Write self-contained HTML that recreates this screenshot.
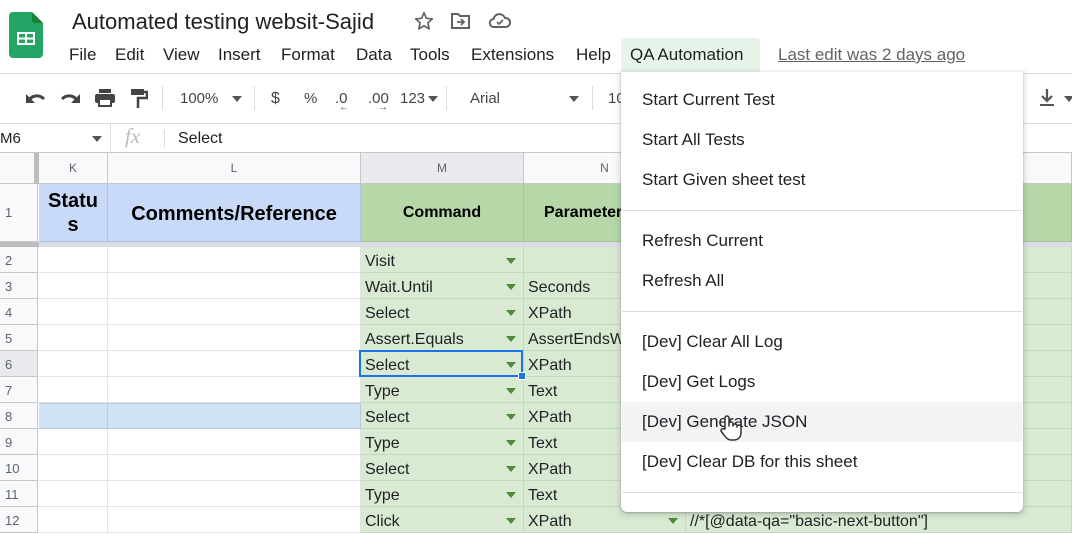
<!DOCTYPE html>
<html><head><meta charset="utf-8"><style>
*{box-sizing:border-box;margin:0;padding:0}
body{width:1072px;height:527px;overflow:hidden;background:#fff;font-family:"Liberation Sans",Arial,sans-serif;position:relative;color:#202124}
.a{position:absolute}
.t{position:absolute;white-space:nowrap}
.menu span{position:absolute;top:45px;font-size:17px;color:#202124}
.tb{position:absolute;top:90px;font-size:15px;color:#444}
.hdr{position:absolute;top:153px;height:31px;background:#f8f9fa;border-right:1px solid #c7c7c7;border-bottom:1px solid #c7c7c7;font-size:12px;color:#5f6368;text-align:center;line-height:31px}
.rn{position:absolute;left:0;width:38px;height:26px;background:#f8f9fa;border-bottom:1px solid #c7c7c7;border-right:1px solid #c7c7c7;font-size:13px;color:#5f6368;padding-left:5px;line-height:27px}
.c{position:absolute;height:26px;border-right:1px solid #e2e3e3;border-bottom:1px solid #e2e3e3;font-size:16px;line-height:30px;padding-left:4px;white-space:nowrap;overflow:hidden}
.g{background:#d9ead3;border-color:#c3d9bc}
.dd{position:absolute;width:0;height:0;border-left:5px solid transparent;border-right:5px solid transparent;border-top:6px solid #4f8a3b}
.mi{position:absolute;left:642px;font-size:17px;color:#202124;white-space:nowrap}
.sep{position:absolute;left:622px;width:400px;height:1px;background:#dadce0}
</style></head><body>
<svg class="a" style="left:9px;top:12px" width="34" height="46" viewBox="0 0 34 46"><path d="M4 0H23L34 11V42a4 4 0 0 1-4 4H4a4 4 0 0 1-4-4V4a4 4 0 0 1 4-4z" fill="#23a566"/><path d="M23 0L34 11H26a3 3 0 0 1-3-3z" fill="#188038"/><rect x="8" y="20" width="18" height="13" fill="#fff"/><rect x="10" y="22" width="6" height="3.5" fill="#23a566"/><rect x="18" y="22" width="6" height="3.5" fill="#23a566"/><rect x="10" y="27.5" width="6" height="3.5" fill="#23a566"/><rect x="18" y="27.5" width="6" height="3.5" fill="#23a566"/></svg>
<div class="t" style="left:72px;top:9px;font-size:22px;color:#202124">Automated testing websit-Sajid</div>
<svg class="a" style="left:413px;top:10px" width="22" height="22" viewBox="0 0 24 24"><path d="M12 3l2.6 6.1 6.6.6-5 4.4 1.5 6.5L12 17.2 6.3 20.6l1.5-6.5-5-4.4 6.6-.6z" fill="none" stroke="#5f6368" stroke-width="1.8" stroke-linejoin="round"/></svg>
<svg class="a" style="left:450px;top:11px" width="22" height="20" viewBox="0 0 22 20"><path d="M2 3h6l2 2h9v12H2z" fill="none" stroke="#5f6368" stroke-width="2"/><path d="M7 11h7M11 8l3 3-3 3" fill="none" stroke="#5f6368" stroke-width="1.8"/></svg>
<svg class="a" style="left:488px;top:11px" width="24" height="20" viewBox="0 0 24 20"><path d="M6 16a4 4 0 0 1-.5-8A6 6 0 0 1 17 7a4.5 4.5 0 0 1 1 9z" fill="none" stroke="#5f6368" stroke-width="2"/><path d="M9 11l2 2 4-4" fill="none" stroke="#5f6368" stroke-width="1.8"/></svg>
<div class="menu"><span style="left:69px">File</span><span style="left:115px">Edit</span><span style="left:163px">View</span><span style="left:218px">Insert</span><span style="left:281px">Format</span><span style="left:356px">Data</span><span style="left:410px">Tools</span><span style="left:471px">Extensions</span><span style="left:576px">Help</span></div>
<div class="a" style="left:621px;top:38px;width:139px;height:34px;background:#e6f4ea;border-radius:4px 4px 0 0"></div>
<div class="t" style="left:630px;top:45px;font-size:17px">QA Automation</div>
<div class="t" style="left:778px;top:45px;font-size:17px;color:#5f6368;text-decoration:underline">Last edit was 2 days ago</div>
<div class="a" style="left:0;top:73px;width:1072px;height:1px;background:#dadce0"></div>
<svg class="a" style="left:24px;top:90px" width="24" height="16" viewBox="0 0 24 16"><path d="M4 12C7 5 15 4 20 9" fill="none" stroke="#444" stroke-width="3"/><path d="M2 4v9h9z" fill="#444"/></svg>
<svg class="a" style="left:58px;top:90px" width="24" height="16" viewBox="0 0 24 16"><path d="M20 12C17 5 9 4 4 9" fill="none" stroke="#444" stroke-width="3"/><path d="M22 4v9h-9z" fill="#444"/></svg>
<svg class="a" style="left:94px;top:88px" width="22" height="20" viewBox="0 0 22 20"><rect x="5" y="1" width="12" height="4" fill="#444"/><rect x="1" y="6" width="20" height="9" rx="2" fill="#444"/><rect x="5" y="11" width="12" height="7" fill="#fff" stroke="#444" stroke-width="2"/></svg>
<svg class="a" style="left:130px;top:88px" width="18" height="22" viewBox="0 0 18 22"><rect x="1" y="1" width="13" height="6" fill="#444"/><path d="M14 4h3v6H8v10" fill="none" stroke="#444" stroke-width="2.5"/></svg>
<div class="a" style="left:162px;top:86px;width:1px;height:24px;background:#dadce0"></div>
<div class="tb" style="left:180px">100%</div>
<div class="dd" style="left:232px;top:96px;border-top-color:#555"></div>
<div class="a" style="left:254px;top:86px;width:1px;height:24px;background:#dadce0"></div>
<div class="tb" style="left:271px;font-size:16px">$</div>
<div class="tb" style="left:304px">%</div>
<div class="tb" style="left:335px">.0</div><div class="t" style="left:339px;top:102px;font-size:10px;color:#444">←</div>
<div class="tb" style="left:368px">.00</div><div class="t" style="left:378px;top:102px;font-size:10px;color:#444">→</div>
<div class="tb" style="left:400px">123</div><div class="dd" style="left:428px;top:96px;border-top-color:#555"></div>
<div class="a" style="left:446px;top:86px;width:1px;height:24px;background:#dadce0"></div>
<div class="tb" style="left:470px">Arial</div>
<div class="dd" style="left:569px;top:96px;border-top-color:#555"></div>
<div class="a" style="left:592px;top:86px;width:1px;height:24px;background:#dadce0"></div>
<div class="tb" style="left:608px">10</div>
<svg class="a" style="left:1038px;top:88px" width="18" height="20" viewBox="0 0 18 20"><path d="M9 1v12M4 8l5 5 5-5" fill="none" stroke="#555" stroke-width="2.2"/><rect x="2" y="16" width="14" height="2" fill="#555"/></svg>
<div class="dd" style="left:1064px;top:96px;border-top-color:#555"></div>
<div class="a" style="left:0;top:123px;width:1072px;height:1px;background:#dadce0"></div>
<div class="t" style="left:0;top:130px;font-size:15px">M6</div>
<div class="dd" style="left:92px;top:136px;border-top-color:#555"></div>
<div class="a" style="left:110px;top:124px;width:1px;height:28px;background:#dadce0"></div>
<div class="t" style="left:125px;top:124px;font-size:21px;font-style:italic;color:#bbb;font-family:'Liberation Serif',serif">fx</div>
<div class="a" style="left:164px;top:130px;width:1px;height:18px;background:#dadce0"></div>
<div class="t" style="left:178px;top:130px;font-size:16px">Select</div>
<div class="a" style="left:0;top:152px;width:1072px;height:1px;background:#c7c7c7"></div>
<div class="hdr" style="left:0;width:38px"></div>
<div class="a" style="left:34px;top:153px;width:5px;height:31px;background:#bdbdbd"></div>
<div class="hdr" style="left:39px;width:69px">K</div>
<div class="hdr" style="left:108px;width:253px">L</div>
<div class="hdr" style="left:361px;width:163px;background:#e8eaed">M</div>
<div class="hdr" style="left:524px;width:162px">N</div>
<div class="hdr" style="left:686px;width:386px"></div>
<div class="rn" style="top:184px;height:58px;line-height:58px">1</div>
<div class="c" style="left:39px;top:184px;width:69px;height:58px;background:#c9daf8;border-color:#aec3e6;font-weight:bold;font-size:20px;line-height:24px;text-align:center;padding:5px 0 0;color:#000;white-space:normal">Statu<br>s</div>
<div class="c" style="left:108px;top:184px;width:253px;height:58px;background:#c9daf8;border-color:#aec3e6;font-weight:bold;font-size:20px;line-height:60px;text-align:center;padding:0;color:#000">Comments/Reference</div>
<div class="c" style="left:361px;top:184px;width:163px;height:58px;background:#b6d7a8;border-color:#a2c894;font-weight:bold;line-height:58px;text-align:center;padding:0;color:#000">Command</div>
<div class="c" style="left:524px;top:184px;width:162px;height:58px;background:#b6d7a8;border-color:#a2c894;font-weight:bold;line-height:58px;padding-left:20px;color:#000">Parameter</div>
<div class="c" style="left:686px;top:184px;width:386px;height:58px;background:#b6d7a8;border-color:#a2c894"></div>
<div class="a" style="left:0;top:242px;width:39px;height:5px;background:#bdbdbd"></div>
<div class="a" style="left:39px;top:242px;width:1033px;height:5px;background:#dadde6"></div>
<div class="rn" style="top:247px">2</div><div class="c" style="left:39px;top:247px;width:69px"></div><div class="c" style="left:108px;top:247px;width:253px"></div><div class="c g" style="left:361px;top:247px;width:163px">Visit</div><div class="c g" style="left:524px;top:247px;width:162px"></div><div class="c g" style="left:686px;top:247px;width:386px"></div>
<div class="rn" style="top:273px">3</div><div class="c" style="left:39px;top:273px;width:69px"></div><div class="c" style="left:108px;top:273px;width:253px"></div><div class="c g" style="left:361px;top:273px;width:163px">Wait.Until</div><div class="c g" style="left:524px;top:273px;width:162px">Seconds</div><div class="c g" style="left:686px;top:273px;width:386px"></div>
<div class="rn" style="top:299px">4</div><div class="c" style="left:39px;top:299px;width:69px"></div><div class="c" style="left:108px;top:299px;width:253px"></div><div class="c g" style="left:361px;top:299px;width:163px">Select</div><div class="c g" style="left:524px;top:299px;width:162px">XPath</div><div class="c g" style="left:686px;top:299px;width:386px"></div>
<div class="rn" style="top:325px">5</div><div class="c" style="left:39px;top:325px;width:69px"></div><div class="c" style="left:108px;top:325px;width:253px"></div><div class="c g" style="left:361px;top:325px;width:163px">Assert.Equals</div><div class="c g" style="left:524px;top:325px;width:162px">AssertEndsWith</div><div class="c g" style="left:686px;top:325px;width:386px"></div>
<div class="rn" style="top:351px;background:#e8eaed">6</div><div class="c" style="left:39px;top:351px;width:69px"></div><div class="c" style="left:108px;top:351px;width:253px"></div><div class="c g" style="left:361px;top:351px;width:163px">Select</div><div class="c g" style="left:524px;top:351px;width:162px">XPath</div><div class="c g" style="left:686px;top:351px;width:386px"></div>
<div class="rn" style="top:377px">7</div><div class="c" style="left:39px;top:377px;width:69px"></div><div class="c" style="left:108px;top:377px;width:253px"></div><div class="c g" style="left:361px;top:377px;width:163px">Type</div><div class="c g" style="left:524px;top:377px;width:162px">Text</div><div class="c g" style="left:686px;top:377px;width:386px"></div>
<div class="rn" style="top:403px">8</div><div class="c" style="left:39px;top:403px;width:69px;background:#cfe2f3;border-color:#b4cbe0;border-top:1px solid #b4cbe0"></div><div class="c" style="left:108px;top:403px;width:253px;background:#cfe2f3;border-color:#b4cbe0;border-top:1px solid #b4cbe0"></div><div class="c g" style="left:361px;top:403px;width:163px">Select</div><div class="c g" style="left:524px;top:403px;width:162px">XPath</div><div class="c g" style="left:686px;top:403px;width:386px"></div>
<div class="rn" style="top:429px">9</div><div class="c" style="left:39px;top:429px;width:69px"></div><div class="c" style="left:108px;top:429px;width:253px"></div><div class="c g" style="left:361px;top:429px;width:163px">Type</div><div class="c g" style="left:524px;top:429px;width:162px">Text</div><div class="c g" style="left:686px;top:429px;width:386px"></div>
<div class="rn" style="top:455px">10</div><div class="c" style="left:39px;top:455px;width:69px"></div><div class="c" style="left:108px;top:455px;width:253px"></div><div class="c g" style="left:361px;top:455px;width:163px">Select</div><div class="c g" style="left:524px;top:455px;width:162px">XPath</div><div class="c g" style="left:686px;top:455px;width:386px"></div>
<div class="rn" style="top:481px">11</div><div class="c" style="left:39px;top:481px;width:69px"></div><div class="c" style="left:108px;top:481px;width:253px"></div><div class="c g" style="left:361px;top:481px;width:163px">Type</div><div class="c g" style="left:524px;top:481px;width:162px">Text</div><div class="c g" style="left:686px;top:481px;width:386px"></div>
<div class="rn" style="top:507px">12</div><div class="c" style="left:39px;top:507px;width:69px"></div><div class="c" style="left:108px;top:507px;width:253px"></div><div class="c g" style="left:361px;top:507px;width:163px">Click</div><div class="c g" style="left:524px;top:507px;width:162px">XPath</div><div class="c g" style="left:686px;top:507px;width:386px">//*[@data-qa="basic-next-button"]</div>
<div class="dd" style="left:506px;top:258px"></div><div class="dd" style="left:506px;top:284px"></div><div class="dd" style="left:506px;top:310px"></div><div class="dd" style="left:506px;top:336px"></div><div class="dd" style="left:506px;top:362px"></div><div class="dd" style="left:506px;top:388px"></div><div class="dd" style="left:506px;top:414px"></div><div class="dd" style="left:506px;top:440px"></div><div class="dd" style="left:506px;top:466px"></div><div class="dd" style="left:506px;top:492px"></div><div class="dd" style="left:506px;top:518px"></div><div class="dd" style="left:668px;top:518px"></div>
<div class="a" style="left:359px;top:350px;width:164px;height:27px;border:2px solid #1a73e8"></div>
<div class="a" style="left:518px;top:372px;width:8px;height:8px;background:#1a73e8;border:1px solid #fff"></div>
<div class="a" style="left:621px;top:72px;width:402px;height:440px;background:#fff;border-radius:0 0 6px 6px;box-shadow:0 2px 6px 2px rgba(60,64,67,.15),0 1px 2px rgba(60,64,67,.3)"></div>
<div class="a" style="left:622px;top:402px;width:400px;height:40px;background:#f1f3f4"></div>
<div class="mi" style="top:90px">Start Current Test</div>
<div class="mi" style="top:130px">Start All Tests</div>
<div class="mi" style="top:170px">Start Given sheet test</div>
<div class="sep" style="top:210px"></div>
<div class="mi" style="top:231px">Refresh Current</div>
<div class="mi" style="top:271px">Refresh All</div>
<div class="sep" style="top:311px"></div>
<div class="mi" style="top:332px">[Dev] Clear All Log</div>
<div class="mi" style="top:372px">[Dev] Get Logs</div>
<div class="mi" style="top:412px">[Dev] Generate JSON</div>
<div class="mi" style="top:452px">[Dev] Clear DB for this sheet</div>
<div class="sep" style="top:492px"></div>
<svg class="a" style="left:718px;top:414px" width="26" height="28" viewBox="0 0 26 28"><path d="M7 15V4a2 2 0 0 1 4 0v8V10a2 2 0 0 1 4 0v2a2 2 0 0 1 4 0v1a2 2 0 0 1 4 0v6c0 4-3 7-7 7h-3c-3 0-5-2-7-5l-3-4a2 2 0 0 1 3-2z" fill="#fff" stroke="#333" stroke-width="1.5" stroke-linejoin="round"/></svg>
</body></html>
